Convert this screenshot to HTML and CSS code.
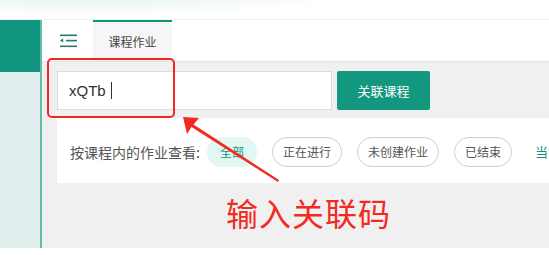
FILE: index.html
```html
<html>
  <head>
    <meta charset="utf-8">
    <link rel="stylesheet" href="styles.css">
  </head>
  <body>
    <div class="top-band"></div>
    <div class="frame">
      <div class="sidebar">
        <div class="sidebar-head"></div>
      </div>
      <div class="main">
        <div class="header">
          <div class="menu-icon">
            <svg width="17" height="14" viewBox="0 0 17 14">
              <rect x="0" y="0.5" width="17" height="1.6" fill="#2b7a6e"/>
              <path d="M0 6.6 L3.2 4.6 L3.2 8.6 Z" fill="#2b7a6e"/>
              <rect x="6" y="5.8" width="11" height="1.6" fill="#2b7a6e"/>
              <rect x="0" y="11.5" width="17" height="1.6" fill="#2b7a6e"/>
            </svg>
          </div>
          <div class="tab">课程作业</div>
        </div>
        <div class="content">
          <div class="bind-row">
            <div class="code-input">xQTb<span class="caret"></span></div>
            <button class="bind-btn">关联课程</button>
          </div>
          <div class="filter-card">
            <span class="filter-label">按课程内的作业查看:</span>
            <span class="pill pill-active">全部</span>
            <span class="pill">正在进行</span>
            <span class="pill">未创建作业</span>
            <span class="pill">已结束</span>
            <span class="more-link">当前</span>
          </div>
        </div>
      </div>
    </div>

    <div class="mark-box"></div>
    <svg class="mark-arrow" width="549" height="255" viewBox="0 0 549 255">
      <path d="M183 117 L199 118 L193.5 124.5 L279 180 L278 182 L191.5 127 L187 134 Z" fill="#f22a22"/>
    </svg>
    <div class="mark-text">输入关联码</div>
  </body>
</html>
```
FILE: styles.css
```css
body {
    margin: 0;
    width: 549px;
    height: 255px;
    overflow: hidden;
    background: #fff;
    font-family: "Noto Sans CJK SC", "Liberation Sans", sans-serif;
    position: relative;
}
.top-band {
    height: 19px;
    border-bottom: 1px solid #eef2f1;
    background: radial-gradient(ellipse 260px 22px at 90px -6px, #e3f1ee 0%, #f6fbfa 70%, #fff 100%);
}
.frame {
    display: flex;
    height: 228px;
}
.sidebar {
    width: 40px;
    flex-shrink: 0;
    background: #e1eeee;
    border-right: 2px solid #62bca8;
}
.sidebar-head {
    height: 52px;
    background: #12957f;
}
.main {
    flex: 1;
    min-width: 0;
    overflow: hidden;
    display: flex;
    flex-direction: column;
    background: #f0f0f0;
}
.header {
    height: 41px;
    background: #fff;
    border-bottom: 1px solid #e4e4e4;
    display: flex;
    align-items: stretch;
}
.menu-icon {
    width: 51px;
    display: flex;
    align-items: center;
    padding-top: 1px;
    padding-left: 18px;
    box-sizing: border-box;
}
.tab {
    width: 79px;
    border-top: 2px solid #12957f;
    background: #f6f6f6;
    color: #444;
    font-size: 12px;
    display: flex;
    align-items: center;
    justify-content: center;
    box-sizing: border-box;
}
.content {
    padding-left: 15px;
}
.bind-row {
    display: flex;
    gap: 5px;
    padding-top: 9px;
    height: 39px;
    margin-bottom: 8px;
}
.code-input {
    width: 275px;
    height: 39px;
    box-sizing: border-box;
    background: #fff;
    border: 1px solid #dcdcdc;
    padding-left: 11px;
    font-family: "Liberation Sans", sans-serif;
    font-size: 15px;
    color: #333;
    display: flex;
    align-items: center;
}
.caret {
    display: inline-block;
    width: 1px;
    height: 17px;
    background: #333;
    margin-left: 5px;
}
.bind-btn {
    width: 93px;
    height: 39px;
    flex-shrink: 0;
    border: none;
    border-radius: 2px;
    background: #13977f;
    color: #fff;
    font-family: "Noto Sans CJK SC", sans-serif;
    font-size: 13px;
    padding: 0;
}
.filter-card {
    height: 65px;
    background: #fff;
    display: flex;
    align-items: center;
    padding-left: 13px;
    padding-top: 2px;
    box-sizing: border-box;
    white-space: nowrap;
}
.filter-label {
    font-size: 14px;
    color: #555;
    margin-right: 7px;
}
.pill {
    height: 30px;
    flex-shrink: 0;
    box-sizing: border-box;
    border: 1px solid #cfcfcf;
    border-radius: 15px;
    padding: 0 10px;
    font-size: 12px;
    color: #555;
    display: flex;
    align-items: center;
    margin-right: 15px;
    background: #fff;
}
.pill-active {
    border-color: #e2f6f2;
    background: #e2f6f2;
    color: #12957f;
    width: 50px;
    justify-content: center;
}
.more-link {
    font-size: 13px;
    color: #12957f;
    margin-left: 8px;
}
.mark-box {
    position: absolute;
    left: 47px;
    top: 58px;
    width: 128px;
    height: 60px;
    box-sizing: border-box;
    border: 2.5px solid #f0281f;
    border-radius: 5px;
}
.mark-arrow {
    position: absolute;
    left: 0;
    top: 0;
}
.mark-text {
    position: absolute;
    left: 226px;
    top: 189px;
    font-size: 32px;
    line-height: 46px;
    color: #f12a22;
    letter-spacing: 1px;
}
```
